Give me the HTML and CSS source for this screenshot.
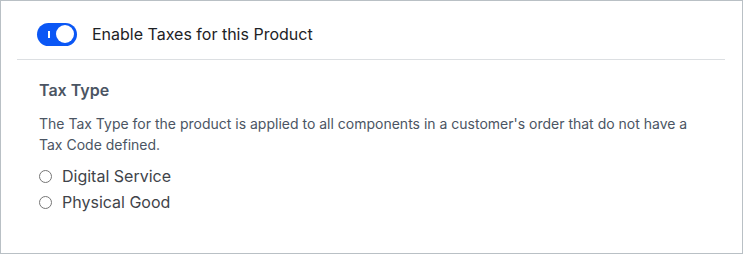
FILE: index.html
```html
<!DOCTYPE html>
<html lang="en">
<head>
    <meta charset="UTF-8">
    <title>Product Taxes</title>
    <link rel="stylesheet" href="styles.css">
</head>
<body>
    <div class="panel">
        <div class="toggle-row">
            <span class="switch"><span class="switch-mark"></span><span class="switch-knob"></span></span>
            <span class="toggle-label">Enable Taxes for this Product</span>
        </div>
        <div class="tax-section">
            <h3 class="section-title">Tax Type</h3>
            <p class="section-help">The Tax Type for the product is applied to all components in a customer's order that do not have a Tax Code defined.</p>
            <label class="radio-row"><span class="radio"></span>Digital Service</label>
            <label class="radio-row"><span class="radio"></span>Physical Good</label>
        </div>
    </div>
</body>
</html>
```

FILE: styles.css
```css
body {
    margin: 0;
    font-family: Inter, "Noto Sans", sans-serif;
    background: #fff;
}

.panel {
    width: 743px;
    height: 254px;
    box-sizing: border-box;
    border: 1px solid #b9c0c5;
    background: #fff;
}

.toggle-row {
    display: flex;
    align-items: center;
    gap: 15px;
    height: 59px;
    box-sizing: border-box;
    padding: 8px 0 0 20px;
    margin: 0 17px 0 16px;
    border-bottom: 1px solid #dcdfe2;
}

.switch {
    position: relative;
    width: 40px;
    height: 23px;
    border-radius: 12px;
    background: #0b57f5;
    flex-shrink: 0;
}

.switch-mark {
    position: absolute;
    left: 11px;
    top: 8px;
    width: 2px;
    height: 7px;
    background: #fff;
}

.switch-knob {
    position: absolute;
    right: 3px;
    top: 2.5px;
    width: 18px;
    height: 18px;
    border-radius: 50%;
    background: #fff;
}

.toggle-label {
    font-size: 16px;
    color: #1d2226;
}

.tax-section {
    padding: 20px 0 0 38px;
}

.section-title {
    margin: 0 0 13px;
    font-size: 16px;
    font-weight: 600;
    color: #4b5563;
}

.section-help {
    margin: 0 0 8px;
    width: 672px;
    font-size: 14px;
    line-height: 21px;
    color: #4b5563;
}

.radio-row {
    display: flex;
    align-items: center;
    gap: 10px;
    height: 26px;
    font-size: 16px;
    color: #3f444a;
}

.radio {
    width: 11px;
    height: 11px;
    border: 1px solid #767676;
    border-radius: 50%;
    background: #fff;
}
```
